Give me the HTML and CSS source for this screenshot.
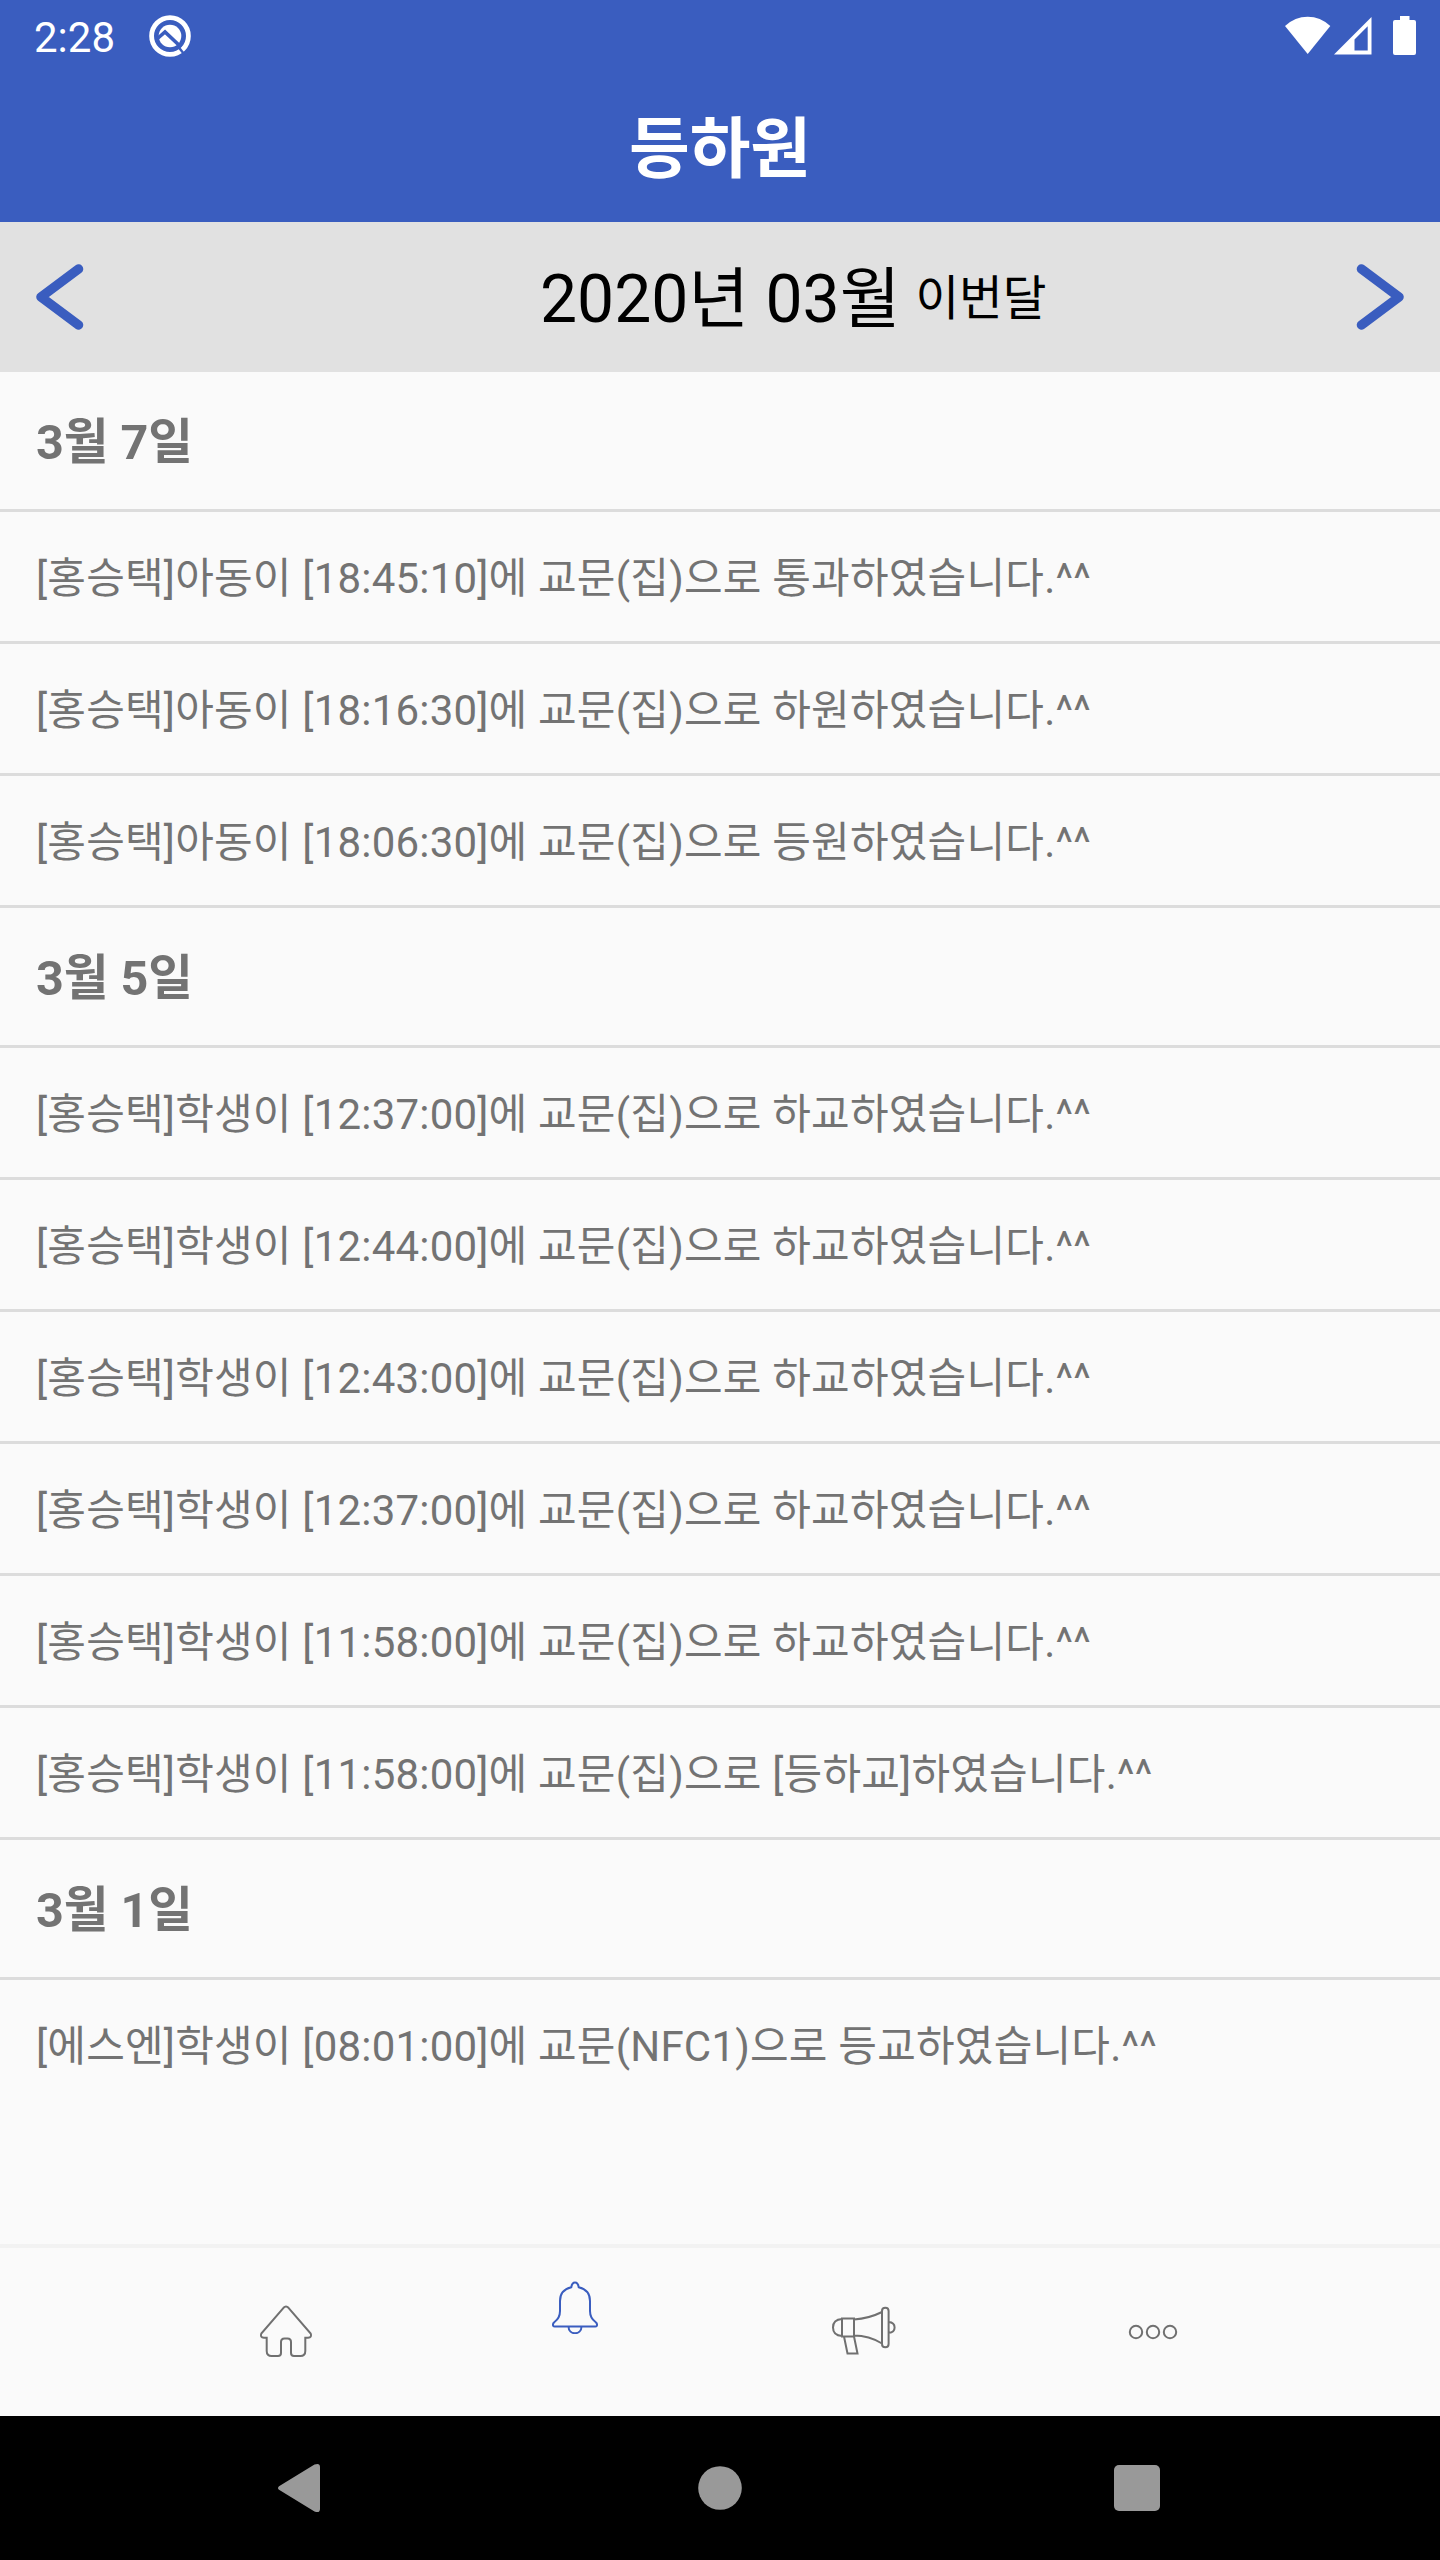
FILE: index.html
```html
<!DOCTYPE html>
<html lang="ko">

<head>
    <meta charset="UTF-8">
    <meta name="viewport" content="width=device-width, initial-scale=1.0">
    <title>등하원</title>
    <link rel="stylesheet" href="styles.css">
</head>

<body>

    <header class="header">
        <div class="status-bar">
            <span class="clock">2:28</span>
            <svg class="q-icon" width="44" height="44" viewBox="0 0 44 44">
                <circle cx="22" cy="22" r="18.400" fill="none" stroke="#fff" stroke-width="4.800"/>
                <circle cx="22" cy="22" r="11.300" fill="#fff"/>
                <path d="M9.500 24.500l7.500-6.500L33 33" fill="none" stroke="#3a5dbf" stroke-width="3.600"/>
                <path d="M30.500 33l5.500 7" fill="none" stroke="#3a5dbf" stroke-width="2.400"/>
            </svg>
            <div class="status-icons">
                <svg width="46" height="40" viewBox="0 0 46 40">
                    <path d="M0 10Q10 .8 22.700 .8T45.300 10L22.700 38z" fill="#fff"/>
                </svg>
                <svg width="40" height="40" viewBox="0 0 40 40">
                    <path d="M0 38.500L37.500 1v37.500zM20.500 23.500V34.500H33.700V10.300z" fill="#fff" fill-rule="evenodd"/>
                </svg>
                <svg class="battery" width="24" height="40" viewBox="0 0 24 40">
                    <path d="M7 0h9.500v4H21q2 0 2 2v31q0 2-2 2H2q-2 0-2-2V6q0-2 2-2h5z" fill="#fff"/>
                </svg>
            </div>
        </div>
        <h1 class="title">등하원</h1>
    </header>

    <div class="month-bar">
        <svg width="48" height="70" viewBox="0 0 48 70">
            <path d="M42.500 7L5 35l37.500 28" class="arrow"/>
        </svg>
        <div class="month">
            <span class="month-name">2020년 03월</span>
            <span class="month-now">이번달</span>
        </div>
        <svg width="48" height="70" viewBox="0 0 48 70">
            <path d="M5.500 7L43 35L5.500 63" class="arrow"/>
        </svg>
    </div>

    <main class="list">
        <h2 class="date">3월 7일</h2>
        <p class="item">[홍승택]아동이 [18:45:10]에 교문(집)으로 통과하였습니다.^^</p>
        <p class="item">[홍승택]아동이 [18:16:30]에 교문(집)으로 하원하였습니다.^^</p>
        <p class="item">[홍승택]아동이 [18:06:30]에 교문(집)으로 등원하였습니다.^^</p>
        <h2 class="date">3월 5일</h2>
        <p class="item">[홍승택]학생이 [12:37:00]에 교문(집)으로 하교하였습니다.^^</p>
        <p class="item">[홍승택]학생이 [12:44:00]에 교문(집)으로 하교하였습니다.^^</p>
        <p class="item">[홍승택]학생이 [12:43:00]에 교문(집)으로 하교하였습니다.^^</p>
        <p class="item">[홍승택]학생이 [12:37:00]에 교문(집)으로 하교하였습니다.^^</p>
        <p class="item">[홍승택]학생이 [11:58:00]에 교문(집)으로 하교하였습니다.^^</p>
        <p class="item">[홍승택]학생이 [11:58:00]에 교문(집)으로 [등하교]하였습니다.^^</p>
        <h2 class="date">3월 1일</h2>
        <p class="item">[에스엔]학생이 [08:01:00]에 교문(NFC1)으로 등교하였습니다.^^</p>
    </main>

    <nav class="tabs">
        <a class="tab">
            <svg width="54" height="54" viewBox="0 0 54 54">
                <path d="M24.500 2.800q2.500-2.600 5 0L51.700 28.500q1.600 4-2.700 4.200h-2.700V46q0 5-5 5H35q-3 0-3-3V37q0-3.500-3.500-3.500h-3Q22 33.500 22 37v11q0 3-3 3h-6.300q-5 0-5-5V32.700H5q-4.300-.2-2.700-4.200z"/>
            </svg>
        </a>
        <a class="tab active">
            <svg width="54" height="54" viewBox="0 0 54 54">
                <path d="M23.300 7.200q.7-4.700 3.700-4.700t3.700 4.700Q42 9.800 42 21v10q0 7 5.500 11 2.300 1.800 1.200 4-.3.500-1.500.5H6.800q-1.200 0-1.500-.5-1.100-2.200 1.200-4Q12 38 12 31V21Q12 9.800 23.300 7.200zM20.500 46.500c0 9 13 9 13 0"/>
            </svg>
        </a>
        <a class="tab">
            <svg width="66" height="54" viewBox="0 0 66 54">
                <path d="M11 13.500h12v18H11zM11 14q-9 .5-9 8.500t9 8.500M23 14.500q15-1 28-7.500M23 30.500q15 0 28 8M51 6q0-3.300 3.300-3.300T57.600 6v33q0 3.300-3.300 3.300T51 39zM57.600 17q6 .5 6 5.500t-6 5.500M13 31.500l3.500 17h10l-3.500-17"/>
            </svg>
        </a>
        <a class="tab">
            <svg width="54" height="54" viewBox="0 0 54 54">
                <circle cx="10" cy="27" r="6.200"/>
                <circle cx="27" cy="27" r="6.200"/>
                <circle cx="44" cy="27" r="6.200"/>
            </svg>
        </a>
    </nav>

    <div class="system-nav">
        <svg width="48" height="52" viewBox="0 0 48 52">
            <path d="M1 24.200L36.500 2.500Q42 .5 42 5v42q0 4.500-5.500 2.500L1 27.800q-2-1.800 0-3.600z"/>
        </svg>
        <svg width="44" height="44" viewBox="0 0 44 44">
            <circle cx="22" cy="22" r="21.800"/>
        </svg>
        <svg width="46" height="46" viewBox="0 0 46 46">
            <rect width="46" height="46" rx="5"/>
        </svg>
    </div>

</body>
</html>
```
FILE: styles.css
```css
* {
    box-sizing: border-box;
    margin: 0;
    padding: 0;
}

body {
    width: 1440px;
    height: 2560px;
    display: flex;
    flex-direction: column;
    background-color: #fafafa;
    font-family: Roboto, "Noto Sans CJK KR", sans-serif;
    color: #737373;
}

svg {
    display: block;
    flex-shrink: 0;
}

.header {
    height: 222px;
    background-color: #3a5dbf;
    color: #fff;
}

.status-bar {
    height: 84px;
    display: flex;
    align-items: flex-start;
    padding: 14px 23px 0 34px;
}

.clock {
    font-size: 42px;
    line-height: 48px;
}

.q-icon {
    margin-left: 33px;
}

.status-icons {
    margin-left: auto;
    padding-top: 2px;
    display: flex;
    gap: 3px;
}

.battery {
    margin-left: 16px;
}

.title {
    font-size: 66px;
    font-weight: bold;
    line-height: 132px;
    text-align: center;
}

.month-bar {
    height: 150px;
    display: flex;
    align-items: center;
    padding: 0 36px;
    background-color: #e1e1e1;
    color: #000;
}

.arrow {
    fill: none;
    stroke: #3a5dbf;
    stroke-width: 9.5;
    stroke-linecap: round;
    stroke-linejoin: round;
}

.month {
    flex: 1;
    display: flex;
    align-items: center;
    padding-left: 456px;
    white-space: nowrap;
}

.month-name {
    padding-top: 6px;
    font-size: 66px;
    line-height: 144px;
}

.month-now {
    padding-top: 4px;
    margin-left: 15px;
    font-size: 47.5px;
    line-height: 146px;
}

.list {
    height: 1872px;
}

.date,
.item {
    padding: 3px 0 0 36px;
    border-bottom: 3px solid #dcdcdc;
    white-space: nowrap;
}

.date {
    height: 140px;
    font-size: 48.5px;
    line-height: 135px;
}

.item {
    height: 132px;
    font-size: 42px;
    letter-spacing: 0.2px;
    line-height: 127px;
}

.item:last-child {
    border-bottom: none;
}

.tabs {
    height: 172px;
    display: flex;
    justify-content: center;
    padding-right: 2px;
    border-top: 4px solid #f2f2f2;
}

.tab {
    width: 289px;
    display: flex;
    justify-content: center;
    padding-top: 57px;
}

.tab svg {
    fill: none;
    stroke: #707070;
    stroke-width: 2;
}

.tab.active {
    padding-top: 32px;
}

.tab.active svg {
    stroke: #3a5dbf;
}

.system-nav {
    height: 144px;
    display: flex;
    justify-content: space-between;
    align-items: center;
    padding: 0 280px 0 278px;
    background-color: #000;
}

.system-nav svg {
    fill: #999;
}
```
